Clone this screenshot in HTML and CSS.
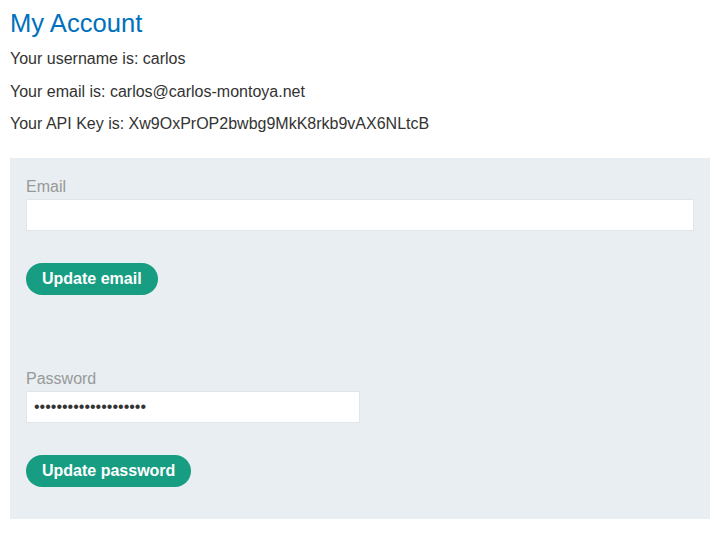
FILE: index.html
```html
<!DOCTYPE html>
<html>
<head>
<meta charset="utf-8">
<link rel="stylesheet" href="styles.css">
</head>
<body>
<div class="page">
  <h1 class="title">My Account</h1>
  <p class="info">Your username is: carlos</p>
  <p class="info">Your email is: carlos@carlos-montoya.net</p>
  <p class="info">Your API Key is: Xw9OxPrOP2bwbg9MkK8rkb9vAX6NLtcB</p>
  <div class="panel">
    <form class="form">
      <label class="label">Email</label>
      <input class="input input-wide" type="email">
      <button class="button" type="button">Update email</button>
    </form>
    <form class="form form-second">
      <label class="label">Password</label>
      <input class="input input-narrow" type="password" value="peter123456789012345">
      <button class="button" type="button">Update password</button>
    </form>
  </div>
</div>
</body>
</html>
```
FILE: styles.css
```css
* { box-sizing: border-box; }
html, body { margin: 0; padding: 0; background: #fff; }
body {
  font-family: "Liberation Sans", Arial, sans-serif;
  font-size: 16px;
  color: #333332;
}
.page {
  width: 700px;
  margin-left: 10px;
  padding-top: 8px;
}
.title {
  margin: 0 0 12px 0;
  font-size: 25.6px;
  font-weight: normal;
  color: #0071bc;
  line-height: 30px;
}
.info {
  margin: 0 0 14px 0;
  line-height: 18.5px;
}
.panel {
  margin-top: 24px;
  background: #e8eef1;
  padding: 19px 16px 32px 16px;
}
.form {
  display: flex;
  flex-direction: column;
  align-items: flex-start;
}
.form-second { margin-top: 74px; }
.label {
  color: #999;
  line-height: 20px;
  margin-bottom: 2px;
}
.input {
  height: 32px;
  background: #fff;
  border: 1px solid #e2e5e6;
  padding: 0 7px;
  font-size: 16px;
  font-family: "Liberation Sans", Arial, sans-serif;
  color: #333;
  outline: none;
}
.input-wide { width: 668px; }
.input-narrow { width: 334px; }
.button {
  margin-top: 32px;
  height: 32px;
  padding: 0 16px;
  border: none;
  border-radius: 20px;
  background: #169d82;
  color: #fff;
  font-family: "Liberation Sans", Arial, sans-serif;
  font-size: 16px;
  font-weight: bold;
  cursor: pointer;
}
```
